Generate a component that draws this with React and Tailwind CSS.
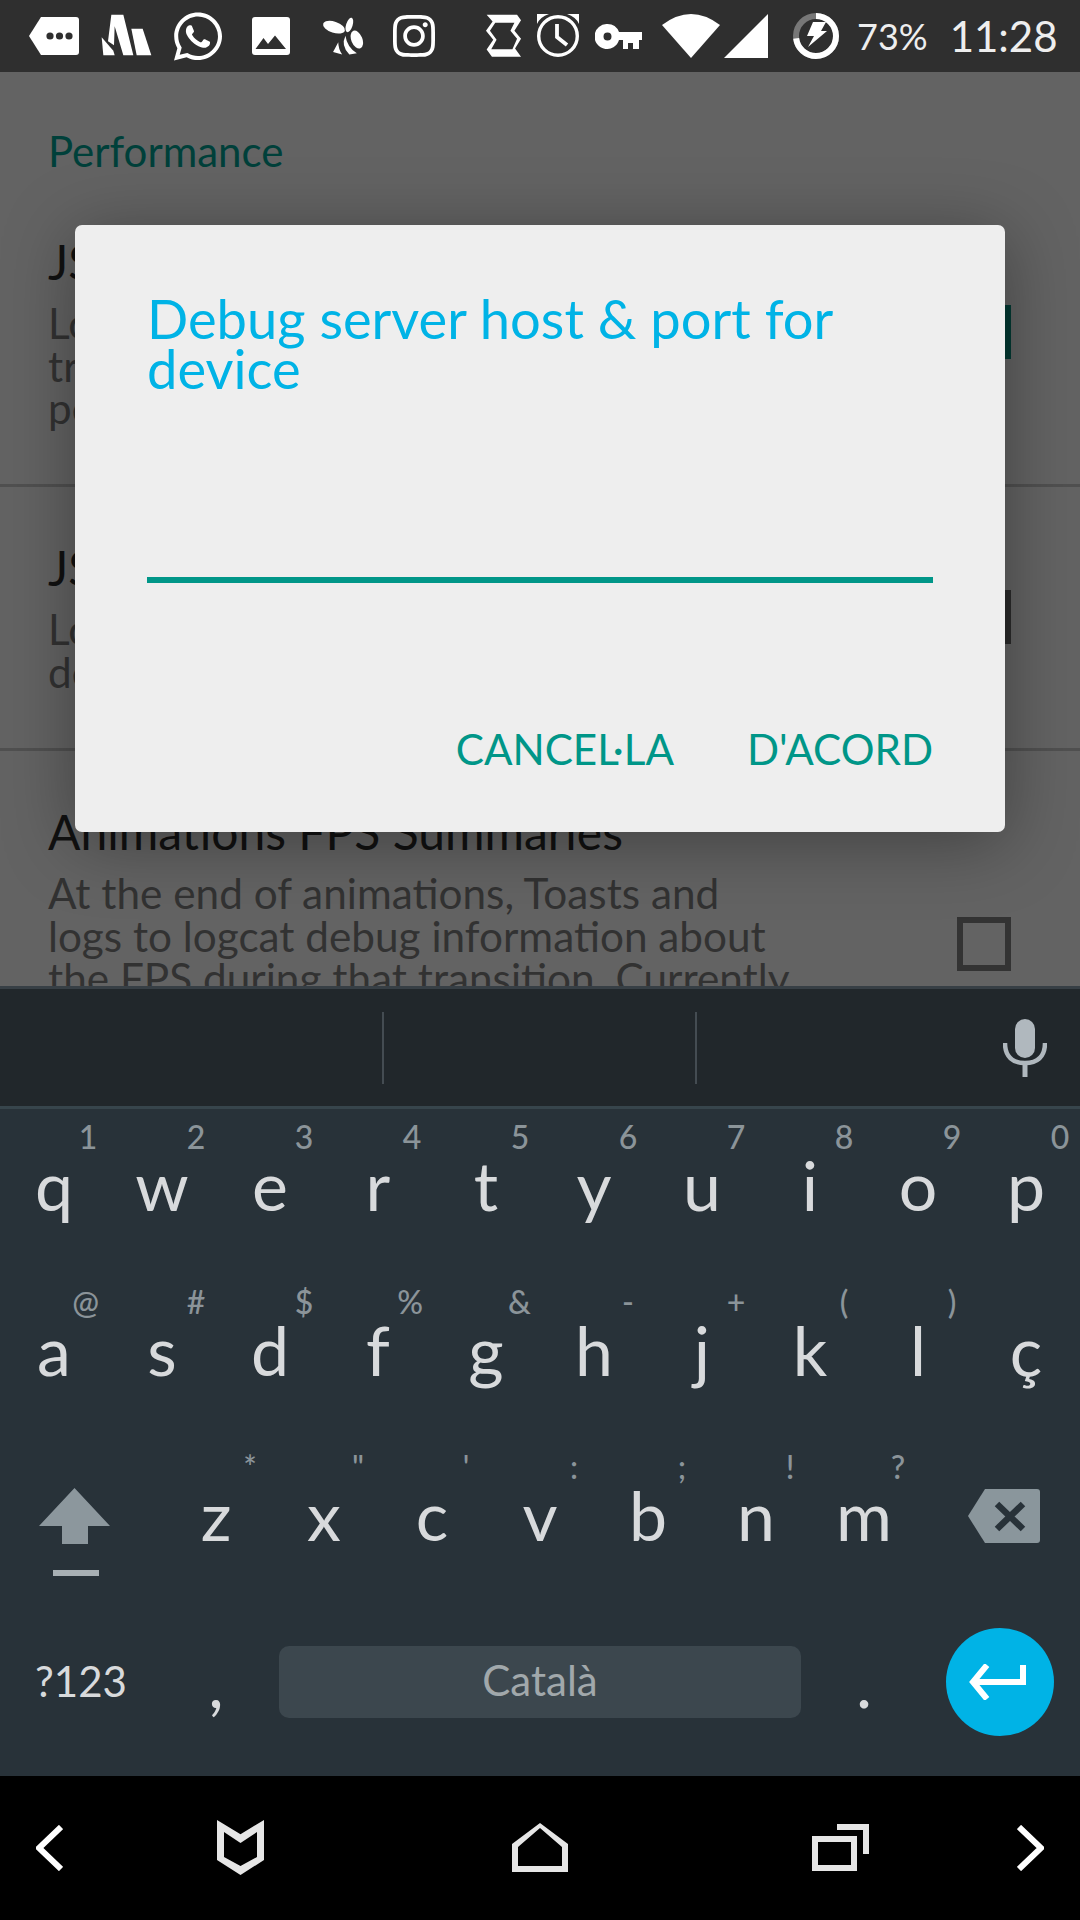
import { FaWhatsapp, FaInstagram } from 'react-icons/fa';

const StatusBar = () => (
    <div className="h-[72px] shrink-0 bg-[#2f2f2f] flex items-center text-white relative">
        <svg viewBox="0 0 50 38" className="w-[50px] h-[38px] ml-[29px]">
            <path d="M12 0H47a3 3 0 0 1 3 3V35a3 3 0 0 1-3 3H12L0 19Z" fill="#fff" />
            <circle cx="21" cy="19" r="3.6" fill="#2f2f2f" />
            <circle cx="30.5" cy="19" r="3.6" fill="#2f2f2f" />
            <circle cx="40" cy="19" r="3.6" fill="#2f2f2f" />
        </svg>
        <svg viewBox="0 0 180 168" className="w-[60px] h-[56px] ml-[17px]" fill="#fff">
            <path d="M17 88L52 128L56 142H22Z" />
            <path d="M36 100L46 20H82L112 142H82L56 55L54 112Z" />
            <path d="M106 62H140L166 142H122Z" />
        </svg>
        <FaWhatsapp className="w-[48px] h-[55px] ml-[18px]" />
        <svg viewBox="0 0 38 38" className="w-[38px] h-[38px] ml-[30px]">
            <rect width="38" height="38" rx="3" fill="#fff" />
            <path d="M3.5 32 L11.5 21 L16 27 L23 18.5 L34 32Z" fill="#2f2f2f" />
        </svg>
        <svg viewBox="925 40 135 125" className="w-[44px] h-[41px] ml-[31px]" fill="#fff">
            <ellipse cx="965" cy="74" rx="35" ry="17" transform="rotate(18 965 74)" />
            <ellipse cx="1012" cy="67" rx="10" ry="23" transform="rotate(18 1012 67)" />
            <ellipse cx="1035" cy="112" rx="17" ry="29" transform="rotate(-22 1035 112)" />
            <path d="M1000 100 Q985 130 1012 158 L1035 154 Q1005 135 1000 100Z" />
            <path d="M978 120 L962 150 L990 158 Q978 140 978 120Z" />
        </svg>
        <FaInstagram className="w-[42px] h-[48px] ml-[28px]" />
        <svg viewBox="15 15 115 138" className="w-[38px] h-[46px] ml-[50px]">
            <path
                fillRule="evenodd"
                fill="#fff"
                d="M20 20H112L124 36L104 68L124 92L106 122L124 147H22L36 147L20 125L40 95L18 68L38 40ZM46 44L30 68L50 95L34 124H98L112 92L92 68L104 44Z"
            />
        </svg>
        <svg viewBox="0 0 42 44" className="w-[42px] h-[44px] ml-[14px]" fill="none" stroke="#fff">
            <circle cx="21" cy="22" r="19.300" strokeWidth="3.4" />
            <path d="M20 10V23L30 31" strokeWidth="3.800" />
            <path d="M0 0H12Q3 3 0 10Z M42 0H30Q39 3 42 10Z" fill="#fff" stroke="none" />
        </svg>
        <svg viewBox="0 0 47 25" className="w-[47px] h-[25px] ml-[16px]">
            <path fillRule="evenodd" fill="#fff" d="M12.5 0a12.5 12.5 0 0 1 11.5 8H47V16H44V25H38V19H33V25H28V16H24A12.5 12.5 0 1 1 12.5 0ZM12.5 8.500a4 4 0 1 0 0 8a4 4 0 0 0 0-8Z" />
        </svg>
        <svg viewBox="0 0 58 44" className="w-[58px] h-[44px] ml-[20px]">
            <path d="M0 11Q29 -11 58 11L29 44Z" fill="#fff" />
        </svg>
        <svg viewBox="0 0 44 44" className="w-[44px] h-[44px] ml-[4px]">
            <path d="M0 44L44 0V44Z" fill="#fff" />
        </svg>
        <svg viewBox="0 0 46 46" className="w-[46px] h-[46px] ml-[25px]" fill="none">
            <circle cx="23" cy="23" r="20" stroke="#777" strokeWidth="6" />
            <circle cx="23" cy="23" r="20" stroke="#fff" strokeWidth="6" pathLength="100" strokeDasharray="73 27" transform="rotate(-90 23 23)" />
            <path d="M20 9H33L28 18H34L15 34L21 23H14Z" fill="#fff" />
        </svg>
        <span className="text-[36px] leading-none ml-[18px] text-[#eeeeee]">73%</span>
        <span className="text-[42px] leading-none ml-[22px] text-[#eeeeee]">11:28</span>
    </div>
);

const SettingRow = ({ title, lines, box, top, border = true }) => (
    <div className={`relative px-[48px] ${top} ${border ? 'border-b-[3px] border-[#505050]' : ''}`}>
        <p className="text-[48px] leading-[46px] text-[#111111]">{title}</p>
        <div className="mt-[17px] text-[42.300px] leading-[42.500px] text-[#323232]">
            {lines.map(line => <p key={line} className="whitespace-nowrap">{line}</p>)}
        </div>
        {box}
    </div>
);

const Settings = () => (
    <div className="flex-1 overflow-hidden bg-[#636363]">
        <p className="pl-[48px] pt-[54px] text-[42px] leading-[50px] text-[#00403a]">Performance</p>
        <SettingRow
            top="h-[311px] pt-[63px]"
            title="JS Dev Mode"
            lines={['Load JavaScript bundle with __DEV__ =', 'true for easier debugging. Disable for', 'performance testing.']}
            box={<div className="absolute right-[69px] top-[129px] w-[54px] h-[54px] bg-[#033a33]" />}
        />
        <SettingRow
            top="h-[264px] pt-[58px]"
            title="JS Minify"
            lines={['Load JavaScript bundle with minify=true for', 'debugging minification issues.']}
            box={<div className="absolute right-[69px] top-[103px] w-[54px] h-[54px] border-[6px] border-[#2b2b2b]" />}
        />
        <SettingRow
            top="pt-[58px]"
            border={false}
            title="Animations FPS Summaries"
            lines={['At the end of animations, Toasts and', 'logs to logcat debug information about', 'the FPS during that transition. Currently']}
            box={<div className="absolute right-[69px] top-[166px] w-[54px] h-[54px] border-[6px] border-[#333333]" />}
        />
    </div>
);

const Dialog = () => (
    <div className="absolute left-[75px] top-[225px] w-[930px] h-[607px] bg-[#eeeeee] rounded-[7px] px-[72px] pt-[68px] shadow-[0_10px_70px_rgba(0,0,0,0.35)]">
        <h2 className="text-[54.300px] leading-[50px] text-[#00b3e6]">Debug server host &amp; port for device</h2>
        <div className="mt-[184px] h-[6px] bg-[#009688]" />
        <div className="mt-[145px] flex justify-end gap-[73px] text-[42.200px] leading-none text-[#009688]">
            <span>CANCEL·LA</span>
            <span>D'ACORD</span>
        </div>
    </div>
);

const Key = ({ letter, hint }) => (
    <div className="relative w-[108px] h-[165px] pt-[42px] text-center text-[68px] leading-none text-[#d8dadc]">
        {letter}
        <span className="absolute right-[9px] top-[12px] min-w-[22px] text-center text-[32px] font-medium leading-none text-[#8b9499]">{hint}</span>
    </div>
);

const row1 = [['q', '1'], ['w', '2'], ['e', '3'], ['r', '4'], ['t', '5'], ['y', '6'], ['u', '7'], ['i', '8'], ['o', '9'], ['p', '0']];
const row2 = [['a', '@'], ['s', '#'], ['d', '$'], ['f', '%'], ['g', '&'], ['h', '-'], ['j', '+'], ['k', '('], ['l', ')'], ['ç', '']];
const row3 = [['z', '*'], ['x', '"'], ['c', "'"], ['v', ':'], ['b', ';'], ['n', '!'], ['m', '?']];

const Keyboard = () => (
    <div className="shrink-0">
        <div className="h-[123px] bg-[#21272b] border-t-[3px] border-b-[3px] border-t-[#373f45] border-b-[#37454c] flex items-center relative">
            <div className="ml-[382px] w-[2px] h-[72px] bg-[#444c52]" />
            <div className="ml-[311px] w-[2px] h-[72px] bg-[#444c52]" />
            <svg viewBox="0 0 44 58" className="w-[44px] h-[58px] ml-[306px]">
                <rect x="12" y="0" width="20" height="39" rx="10" fill="#b0b8be" />
                <path d="M2 24C2 38 10 44 22 44C34 44 42 38 42 24" fill="none" stroke="#b0b8be" strokeWidth="4.500" />
                <rect x="19.500" y="42" width="5" height="16" fill="#b0b8be" />
            </svg>
        </div>
        <div className="bg-[#283239] h-[667px]">
            <div className="flex">
                {row1.map(([letter, hint]) => <Key key={letter} letter={letter} hint={hint} />)}
            </div>
            <div className="flex">
                {row2.map(([letter, hint]) => <Key key={letter} letter={letter} hint={hint} />)}
            </div>
            <div className="flex">
                <div className="w-[162px] h-[165px] pl-[39px] pt-[49px]">
                    <svg viewBox="0 0 71 88" className="w-[71px] h-[88px]">
                        <path d="M35.500 0L71 38H49V56H23V38H0Z" fill="#8c979d" />
                        <rect x="14" y="82" width="46" height="6" fill="#a8b0b4" />
                    </svg>
                </div>
                {row3.map(([letter, hint]) => <Key key={letter} letter={letter} hint={hint} />)}
                <div className="w-[162px] h-[165px] pl-[50px] pt-[50px]">
                    <svg viewBox="0 0 72 54" className="w-[72px] h-[54px]">
                        <path d="M17 0H69a3 3 0 0 1 3 3V51a3 3 0 0 1-3 3H17L0 27Z" fill="#8a969c" />
                        <path d="M29 15L55 40M55 15L29 40" stroke="#283239" strokeWidth="6.500" />
                    </svg>
                </div>
            </div>
            <div className="flex items-center h-[156px]">
                <div className="w-[162px] text-center text-[42px] leading-none text-[#d8dadc] pb-[2px]">?123</div>
                <div className="w-[108px] text-center text-[68px] leading-none text-[#d8dadc]">,</div>
                <div className="w-[540px] px-[9px]">
                    <div className="h-[72px] rounded-[10px] bg-[#3c474e] flex items-center justify-center text-[42px] text-[#a1a8ab] pb-[4px]">Català</div>
                </div>
                <div className="w-[108px] text-center text-[68px] leading-none text-[#d8dadc]">.</div>
                <div className="w-[162px] flex justify-center pl-[2px]">
                    <div className="w-[108px] h-[108px] rounded-full bg-[#00b3e6] flex items-center justify-center pr-[4px]">
                        <svg viewBox="0 0 58 36" className="w-[58px] h-[36px]" fill="none" stroke="#fff" strokeWidth="6">
                            <path d="M54 1V18H6" />
                            <path d="M18 1L4 18L18 35" />
                        </svg>
                    </div>
                </div>
            </div>
        </div>
    </div>
);

const NavBar = () => (
    <div className="h-[144px] shrink-0 bg-black flex items-start pt-[44px] relative">
        <svg viewBox="0 0 27 46" className="w-[27px] h-[46px] ml-[36px] mt-[5px]" fill="none" stroke="#fff" strokeWidth="6">
            <path d="M25 2L3 23L25 44" />
        </svg>
        <svg viewBox="0 0 47 55" className="w-[47px] h-[55px] ml-[154px]">
            <path fillRule="evenodd" fill="#e6e6e6" d="M0 0L23.500 14.300L47 0V40L23.500 55L0 40ZM7 12V37L23.500 46L40 37V12L23.500 23Z" />
        </svg>
        <svg viewBox="0 0 56 49" className="w-[56px] h-[49px] ml-[248px] mt-[3px]">
            <path fillRule="evenodd" fill="#e6e6e6" d="M28 0L56 21V49H0V21ZM28 5L6 24V43H50V24Z" />
        </svg>
        <svg viewBox="0 0 57 47" className="w-[57px] h-[47px] ml-[244px] mt-[4px]" fill="none" stroke="#e6e6e6" strokeWidth="6">
            <rect x="3" y="15" width="39" height="29" />
            <path d="M25 3H54V30" />
        </svg>
        <svg viewBox="0 0 27 46" className="w-[27px] h-[46px] ml-[148px] mt-[5px]" fill="none" stroke="#fff" strokeWidth="6">
            <path d="M2 2L24 23L2 44" />
        </svg>
    </div>
);

const App = () => (
    <div className="relative w-[1080px] h-[1920px] overflow-hidden flex flex-col [font-family:Lato,sans-serif]">
        <StatusBar />
        <Settings />
        <Keyboard />
        <NavBar />
        <Dialog />
    </div>
);

export default App;
